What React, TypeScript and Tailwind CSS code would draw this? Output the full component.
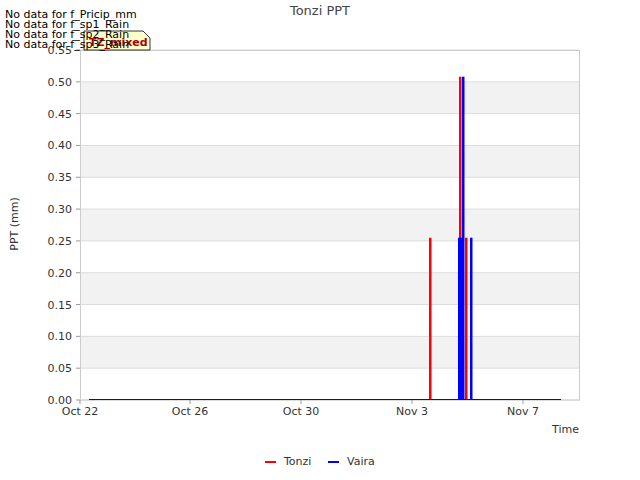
import React from "react";

const y = (v: number) => 400 - (v / 0.55) * 350;

export default function App() {
  const ticks = Array.from({ length: 12 }, (_, i) => i * 0.05);
  const bands = [0.05, 0.15, 0.25, 0.35, 0.45];
  const xt = [
    [80, "Oct 22"],
    [190, "Oct 26"],
    [301, "Oct 30"],
    [412, "Nov 3"],
    [523, "Nov 7"],
  ] as const;
  const bars: [number, number, number, string][] = [
    [429, 2.5, 0.255, "#ff0000"],
    [459, 2.5, 0.508, "#ff0000"],
    [462, 2.5, 0.508, "#0000ff"],
    [458, 3, 0.255, "#0000ff"],
    [461, 3, 0.255, "#0000ff"],
    [465, 2.5, 0.255, "#ff0000"],
    [470, 2.5, 0.255, "#0000ff"],
  ];
  return (
    <div className="relative w-[640px] h-[480px] bg-white" style={{ fontFamily: "'DejaVu Sans', sans-serif" }}>
      <svg width="640" height="480" className="block" fontFamily="DejaVu Sans, sans-serif">
        {bands.map((b) => (
          <rect key={b} x={80} y={y(b + 0.05)} width={500} height={y(b) - y(b + 0.05)} fill="#f2f2f2" />
        ))}
        {ticks.map((t) => (
          <g key={t}>
            <line x1={80} x2={580} y1={y(t)} y2={y(t)} stroke="#dcdcdc" strokeWidth={1} />
            <line x1={76} x2={80} y1={y(t)} y2={y(t)} stroke="#999" />
            <text x={72} y={y(t) + 4} fontSize={11} textAnchor="end" fill="#333">
              {t.toFixed(2)}
            </text>
          </g>
        ))}
        <rect x={80.5} y={50.5} width={499} height={349.5} fill="none" stroke="#cccccc" />
        {xt.map(([x, l]) => (
          <g key={l}>
            <line x1={x} x2={x} y1={400} y2={404} stroke="#999" />
            <text x={x} y={415} fontSize={11} textAnchor="middle" fill="#333">
              {l}
            </text>
          </g>
        ))}
        {bars.map(([x, w, v, c], i) => (
          <rect key={i} x={x} y={y(v)} width={w} height={400 - y(v)} fill={c} />
        ))}
        <line x1={89} x2={561} y1={399.5} y2={399.5} stroke="#0000ff" strokeWidth={1.2} />
        <text x={320} y={15} fontSize={13} textAnchor="middle" fill="#444">Tonzi PPT</text>
        <text x={579} y={433} fontSize={11} textAnchor="end" fill="#333">Time</text>
        <text x={18} y={224} fontSize={11} textAnchor="middle" fill="#333" transform="rotate(-90 18 224)">PPT (mm)</text>
        <path d="M84 31 H143 L150 38 V50 H84 Z" fill="#ffffcc" stroke="#000" strokeWidth={0.8} />
        <text x={89} y={46} fontSize={11} fontWeight="bold" fill="#aa0000">TZ_mixed</text>
        {["No data for f_Pricip_mm", "No data for f_sp1_Rain", "No data for f_sp2_Rain", "No data for f_sp3_Rain"].map((s, i) => (
          <text key={s} x={5} y={18 + i * 10} fontSize={11} fill="#000">{s}</text>
        ))}
        <line x1={265} x2={276} y1={462} y2={462} stroke="#ff0000" strokeWidth={2} />
        <text x={284} y={465} fontSize={11} fill="#333">Tonzi</text>
        <line x1={328} x2={339} y1={462} y2={462} stroke="#0000ff" strokeWidth={2} />
        <text x={347} y={465} fontSize={11} fill="#333">Vaira</text>
      </svg>
    </div>
  );
}
